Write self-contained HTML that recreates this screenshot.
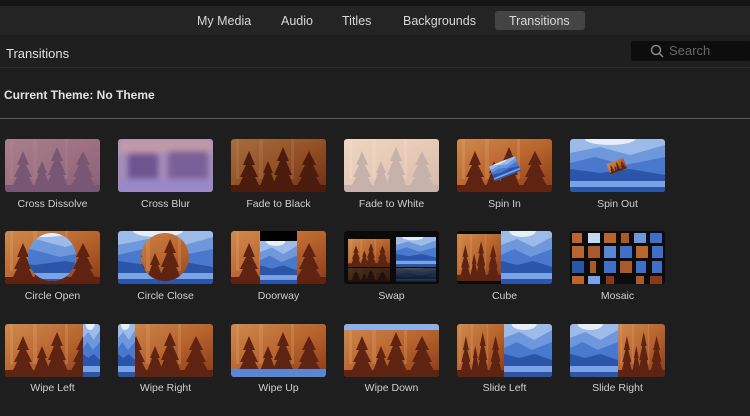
<!DOCTYPE html>
<html><head><meta charset="utf-8"><style>
*{margin:0;padding:0;box-sizing:border-box}
body{width:750px;height:416px;background:#1e1e1e;font-family:"Liberation Sans",sans-serif;position:relative;overflow:hidden;color:#ddd}
.top{position:absolute;left:0;top:0;width:750px;height:6px;background:#141414}
.tabs{position:absolute;left:0;top:6px;width:750px;height:29px;background:#242424}
.tab{position:absolute;top:8px;font-size:12.5px;color:#d8d8d8}
.tsel{position:absolute;left:495px;top:5px;width:90px;height:19px;background:#444;border-radius:3px}
.hdr{position:absolute;left:0;top:35px;width:750px;height:33px;background:#1f1f1f;border-bottom:1px solid #2c2c2c}
.search{position:absolute;left:631px;top:6px;width:119px;height:20px;background:#0d0d0d;border-radius:2px;color:#666;font-size:13px}
.sep{position:absolute;left:0;top:118px;width:750px;height:1px;background:#5a5a5a}
.th{position:absolute;width:95px;height:53px;border-radius:3px;overflow:hidden}
.th svg{display:block}
.lb{position:absolute;width:113px;text-align:center;font-size:10.5px;color:#cfcfcf}
</style></head><body>
<svg width="0" height="0" style="position:absolute">
<defs>
<linearGradient id="fg" x1="0" y1="0" x2="1" y2="1"><stop offset="0" stop-color="#d08a4e"/><stop offset="0.5" stop-color="#b8652e"/><stop offset="1" stop-color="#8a3a18"/></linearGradient>
<filter id="bl"><feGaussianBlur stdDeviation="3"/></filter>
<symbol id="forest" viewBox="0 0 95 53" preserveAspectRatio="none">
<rect width="95" height="53" fill="url(#fg)"/>
<rect x="5" width="3" height="40" fill="#e0a070" opacity=".35"/><rect x="28" width="4" height="40" fill="#e0a070" opacity=".3"/><rect x="60" width="3" height="40" fill="#e0a070" opacity=".3"/>
<g fill="#5e2411">
<path d="M18 12 L12 26 L15 26 L9 38 L12 38 L6 50 L30 50 L24 38 L27 38 L21 26 L24 26Z"/>
<path d="M37 22 L32 34 L34 34 L28 50 L46 50 L40 34 L42 34Z"/>
<path d="M52 8 L46 22 L49 22 L43 36 L46 36 L40 50 L64 50 L58 36 L61 36 L55 22 L58 22Z"/>
<path d="M78 12 L71 26 L74 26 L68 38 L71 38 L64 50 L92 50 L85 38 L88 38 L82 26 L85 26Z"/>
<rect y="46" width="95" height="7"/></g>
</symbol>
<symbol id="mtn" viewBox="0 0 95 53" preserveAspectRatio="none">
<rect width="95" height="53" fill="#9dbbe8"/>
<ellipse cx="40" cy="0" rx="25" ry="6" fill="#e6eefa"/>
<path d="M0 14 L30 8 L60 16 L95 6 V53 H0Z" fill="#6f97dc"/>
<path d="M0 24 L25 18 L55 26 L95 18 V53 H0Z" fill="#4a78cc"/>
<path d="M0 30 L30 34 L60 30 L95 36 V53 H0Z" fill="#2a55a8"/>
<rect y="42" width="95" height="6" fill="#7aa2e6"/>
<rect y="48" width="95" height="5" fill="#2d55a6"/>
</symbol>
<clipPath id="cc"><circle cx="47" cy="26" r="24"/></clipPath>
</defs></svg>

<div class="top"></div>
<div class="tabs">
<div class="tsel"></div>
<div class="tab" style="left:197px">My Media</div>
<div class="tab" style="left:281px">Audio</div>
<div class="tab" style="left:342px">Titles</div>
<div class="tab" style="left:403px">Backgrounds</div>
<div class="tab" style="left:509px">Transitions</div>
</div>
<div class="hdr">
<div style="position:absolute;left:6px;top:11px;font-size:13px;color:#e0e0e0">Transitions</div>
<div class="search"><svg width="14" height="14" style="position:absolute;left:19px;top:3px"><circle cx="6" cy="6" r="4.5" fill="none" stroke="#888" stroke-width="1.5"/><line x1="9.2" y1="9.2" x2="13" y2="13" stroke="#888" stroke-width="1.5"/></svg><span style="position:absolute;left:38px;top:2px">Search</span></div>
</div>
<div style="position:absolute;left:4px;top:88px;font-size:12px;font-weight:bold;color:#e2e2e2">Current Theme: No Theme</div>
<div class="sep"></div>

<!-- Row 1 -->
<div class="th" style="left:5px;top:139px"><svg width="95" height="53"><use href="#forest" width="95" height="53"/><rect width="95" height="53" fill="#8a78b8" opacity=".6"/></svg></div>
<div class="th" style="left:118px;top:139px"><svg width="95" height="53"><rect width="95" height="53" fill="#a48cba"/><g filter="url(#bl)"><rect x="0" y="0" width="95" height="14" fill="#c09aa8"/><rect x="10" y="14" width="30" height="26" fill="#6e5590"/><rect x="50" y="12" width="40" height="28" fill="#7a6098"/><rect y="40" width="95" height="13" fill="#9a88c8"/></g></svg></div>
<div class="th" style="left:231px;top:139px"><svg width="95" height="53"><use href="#forest" width="95" height="53"/><rect width="95" height="53" fill="#000" opacity=".2"/></svg></div>
<div class="th" style="left:344px;top:139px"><svg width="95" height="53"><use href="#forest" width="95" height="53"/><rect width="95" height="53" fill="#fff" opacity=".65"/></svg></div>
<div class="th" style="left:457px;top:139px"><svg width="95" height="53"><use href="#forest" width="95" height="53"/><g transform="rotate(-22 47 30)"><use href="#mtn" x="34" y="22" width="28" height="16"/></g></svg></div>
<div class="th" style="left:570px;top:139px"><svg width="95" height="53"><use href="#mtn" width="95" height="53"/><g transform="rotate(-20 46 28)"><use href="#forest" x="38" y="22" width="18" height="11"/></g></svg></div>

<!-- Row 2 -->
<div class="th" style="left:5px;top:231px"><svg width="95" height="53"><use href="#forest" width="95" height="53"/><g clip-path="url(#cc)"><use href="#mtn" width="95" height="53"/></g></svg></div>
<div class="th" style="left:118px;top:231px"><svg width="95" height="53"><use href="#mtn" width="95" height="53"/><g clip-path="url(#cc)"><use href="#forest" width="95" height="53"/></g></svg></div>
<div class="th" style="left:231px;top:231px"><svg width="95" height="53"><use href="#forest" width="95" height="53"/><rect x="29" width="37" height="53" fill="#000"/><use href="#mtn" x="29" y="10" width="37" height="43"/></svg></div>
<div class="th" style="left:344px;top:231px"><svg width="95" height="53"><rect width="95" height="53" fill="#0a0a0a"/><use href="#forest" x="4" y="8" width="42" height="28"/><use href="#mtn" x="52" y="6" width="40" height="30"/><use href="#forest" x="4" y="37" width="42" height="14" opacity=".3"/><use href="#mtn" x="52" y="37" width="40" height="14" opacity=".3"/></svg></div>
<div class="th" style="left:457px;top:231px"><svg width="95" height="53"><rect width="95" height="53" fill="#0a0a0a"/><use href="#forest" x="0" y="3" width="44" height="47"/><use href="#mtn" x="44" y="0" width="51" height="53"/></svg></div>
<div class="th" style="left:570px;top:231px"><svg width="95" height="53"><rect width="95" height="53" fill="#0c0c0c"/>
<g fill="#3f6fc8"><rect x="2" y="2" width="10" height="10" fill="#b8652e"/><rect x="18" y="2" width="12" height="10" fill="#c5d8f2"/><rect x="34" y="2" width="12" height="10" fill="#b8652e"/><rect x="51" y="2" width="8" height="10" fill="#a85a2a"/><rect x="64" y="2" width="12" height="10" fill="#6f97dc"/><rect x="80" y="2" width="12" height="10"/>
<rect x="2" y="15" width="12" height="12" fill="#b8652e"/><rect x="18" y="15" width="12" height="12" fill="#a85a2a"/><rect x="34" y="15" width="12" height="12" fill="#5a86d6"/><rect x="50" y="15" width="12" height="12"/><rect x="66" y="15" width="12" height="12" fill="#b8652e"/><rect x="82" y="15" width="11" height="12"/>
<rect x="2" y="30" width="12" height="12" fill="#2a55a8"/><rect x="20" y="30" width="6" height="12" fill="#a85a2a"/><rect x="34" y="30" width="12" height="12"/><rect x="50" y="30" width="12" height="12" fill="#a85a2a"/><rect x="66" y="30" width="10" height="12"/><rect x="82" y="30" width="10" height="12"/>
<rect x="2" y="45" width="12" height="8" fill="#b8652e"/><rect x="18" y="45" width="12" height="8" fill="#7aa2e6"/><rect x="36" y="45" width="8" height="8" fill="#8a3a18"/><rect x="66" y="45" width="8" height="8" fill="#a85a2a"/><rect x="80" y="45" width="12" height="8" fill="#8a3a18"/></g></svg></div>

<!-- Row 3 -->
<div class="th" style="left:5px;top:324px"><svg width="95" height="53"><use href="#forest" width="95" height="53"/><use href="#mtn" x="78" width="17" height="53"/></svg></div>
<div class="th" style="left:118px;top:324px"><svg width="95" height="53"><use href="#forest" width="95" height="53"/><use href="#mtn" width="17" height="53"/></svg></div>
<div class="th" style="left:231px;top:324px"><svg width="95" height="53"><use href="#forest" width="95" height="53"/><rect y="45" width="95" height="8" fill="#5a86d6"/></svg></div>
<div class="th" style="left:344px;top:324px"><svg width="95" height="53"><use href="#forest" width="95" height="53"/><rect width="95" height="6" fill="#8fb0e6"/></svg></div>
<div class="th" style="left:457px;top:324px"><svg width="95" height="53"><use href="#forest" width="47" height="53"/><use href="#mtn" x="47" width="48" height="53"/></svg></div>
<div class="th" style="left:570px;top:324px"><svg width="95" height="53"><use href="#mtn" width="48" height="53"/><use href="#forest" x="48" width="47" height="53"/></svg></div>

<div class="lb" style="left:-4px;top:198px">Cross Dissolve</div>
<div class="lb" style="left:109px;top:198px">Cross Blur</div>
<div class="lb" style="left:222px;top:198px">Fade to Black</div>
<div class="lb" style="left:335px;top:198px">Fade to White</div>
<div class="lb" style="left:448px;top:198px">Spin In</div>
<div class="lb" style="left:561px;top:198px">Spin Out</div>
<div class="lb" style="left:-4px;top:290px">Circle Open</div>
<div class="lb" style="left:109px;top:290px">Circle Close</div>
<div class="lb" style="left:222px;top:290px">Doorway</div>
<div class="lb" style="left:335px;top:290px">Swap</div>
<div class="lb" style="left:448px;top:290px">Cube</div>
<div class="lb" style="left:561px;top:290px">Mosaic</div>
<div class="lb" style="left:-4px;top:382px">Wipe Left</div>
<div class="lb" style="left:109px;top:382px">Wipe Right</div>
<div class="lb" style="left:222px;top:382px">Wipe Up</div>
<div class="lb" style="left:335px;top:382px">Wipe Down</div>
<div class="lb" style="left:448px;top:382px">Slide Left</div>
<div class="lb" style="left:561px;top:382px">Slide Right</div>
</body></html>
